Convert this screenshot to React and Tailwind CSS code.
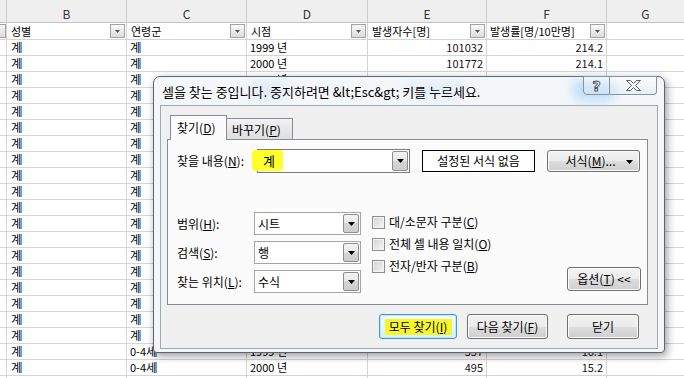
import React from "react";

const years = [];
for (let y = 1999; y <= 2017; y++) years.push(y);
const eVals = ["101032","101772","102914","103350","104127","105018","105402","106711","107298","108003","108420","109152","110037","110618","111294","112005","112743","113380","114026"];
const fVals = ["214.2","214.1","215.8","216.0","216.9","217.4","217.7","219.3","219.9","220.6","220.8","221.5","222.7","223.1","223.9","224.6","225.4","226.0","226.8"];

const rows = years.map((y, i) => ({ b: "계", c: "계", d: `${y} 년`, e: eVals[i], f: fVals[i] }));
rows.push({ b: "계", c: "0-4세", d: "1999 년", e: "557", f: "16.1" });
rows.push({ b: "계", c: "0-4세", d: "2000 년", e: "495", f: "15.2" });
rows.push({ b: "", c: "", d: "", e: "", f: "" });

function KText({ children }) {
  if (!children) return null;
  return (
    <span className="inline-flex items-center">
      <span>{children}</span>
      <span className="inline-block w-[2px] h-[11px] bg-[#5aa5e6] ml-[-1px]" />
    </span>
  );
}

function FilterBtn() {
  return (
    <div className="w-[15px] h-[14px] mr-[1px] shrink-0 border border-[#a3a3a3] bg-[linear-gradient(#f8f8f8,#dcdcdc)] flex items-center justify-center">
      <svg width="5" height="3" viewBox="0 0 5 3"><path d="M0 0h5L2.5 3z" fill="#555" /></svg>
    </div>
  );
}

function Arrow() {
  return (
    <svg width="7" height="4" viewBox="0 0 7 4"><path d="M0 0h7L3.5 4z" fill="#000" /></svg>
  );
}

function ComboBtn() {
  return (
    <div className="w-[16px] self-stretch m-[1px] border border-[#8d8d8d] rounded-[2px] bg-[linear-gradient(#f3f3f3_0%,#e8e8e8_50%,#d6d6d6_50%,#cdcdcd_100%)] flex items-center justify-center shrink-0">
      <Arrow />
    </div>
  );
}

function Combo({ text }) {
  return (
    <div className="w-[107px] h-[23px] border border-[#a5a5a5] bg-white flex items-stretch">
      <div className="flex-1 flex items-center pl-[3px] text-[12px]">{text}</div>
      <ComboBtn />
    </div>
  );
}

function Check({ children }) {
  return (
    <div className="h-[22px] flex items-center">
      <div className="w-[13px] h-[13px] border border-[#8e8f8f] bg-[linear-gradient(135deg,#d2d2d2,#f7f7f7)] shadow-[inset_0_0_0_1px_#f2f2f2]" />
      <span className="ml-[4px] text-[12px] leading-[16px]">{children}</span>
    </div>
  );
}

const btnCls =
  "h-[25px] flex items-center justify-center rounded-[3px] border border-[#707070] bg-[linear-gradient(#f2f2f2_0%,#ebebeb_50%,#dddddd_50%,#cfcfcf_100%)] shadow-[inset_0_0_0_1px_#fbfbfb] text-[12px] leading-[16px]";

export default function App() {
  return (
    <div className="relative w-[684px] h-[378px] overflow-hidden bg-white text-black font-['Noto_Sans_CJK_KR','Noto_Sans',sans-serif]">
      {/* spreadsheet */}
      <div className="flex flex-col">
        <div className="flex h-[23px] bg-[#efefef] border-b border-[#c3c3c3] text-[12px] text-[#333] shrink-0">
          <div className="w-[7px] border-r border-[#cdcdcd]" />
          <div className="w-[120px] border-r border-[#cdcdcd] text-center pt-[6px] leading-[16px]">B</div>
          <div className="w-[120px] border-r border-[#cdcdcd] text-center pt-[6px] leading-[16px]">C</div>
          <div className="w-[121px] border-r border-[#cdcdcd] text-center pt-[6px] leading-[16px]">D</div>
          <div className="w-[119px] border-r border-[#cdcdcd] text-center pt-[6px] leading-[16px]">E</div>
          <div className="w-[120px] border-r border-[#cdcdcd] text-center pt-[6px] leading-[16px]">F</div>
          <div className="flex-1 text-center pt-[6px] leading-[16px]">G</div>
        </div>
        <div className="flex h-[17px] text-[11px] shrink-0">
          <div className="w-[7px] border-r border-b border-[#d4d4d4] flex items-center justify-end">
            <div className="w-[6px] h-[14px] border border-l-0 border-[#a3a3a3] bg-[linear-gradient(#f8f8f8,#dcdcdc)]" />
          </div>
          <div className="w-[120px] border-r border-b border-[#d4d4d4] flex items-center pl-[4px]">
            <span className="flex-1">성별</span><FilterBtn />
          </div>
          <div className="w-[120px] border-r border-b border-[#d4d4d4] flex items-center pl-[4px]">
            <span className="flex-1">연령군</span><FilterBtn />
          </div>
          <div className="w-[121px] border-r border-b border-[#d4d4d4] flex items-center pl-[4px]">
            <span className="flex-1">시점</span><FilterBtn />
          </div>
          <div className="w-[119px] border-r border-b border-[#d4d4d4] flex items-center pl-[4px]">
            <span className="flex-1">발생자수[명]</span><FilterBtn />
          </div>
          <div className="w-[120px] border-r border-b border-[#d4d4d4] flex items-center pl-[3px]">
            <span className="flex-1 whitespace-nowrap">발생률[명/10만명]</span><FilterBtn />
          </div>
          <div className="flex-1 border-b border-[#d4d4d4]" />
        </div>
        {rows.map((r, i) => (
          <div key={i} className="flex h-[16px] text-[11px] leading-[15px] shrink-0">
            <div className="w-[7px] border-r border-b border-[#d4d4d4]" />
            <div className="w-[120px] border-r border-b border-[#d4d4d4] flex items-center pl-[4px]"><KText>{r.b}</KText></div>
            <div className="w-[120px] border-r border-b border-[#d4d4d4] flex items-center pl-[3px]"><KText>{r.c}</KText></div>
            <div className="w-[121px] border-r border-b border-[#d4d4d4] flex items-center pl-[3px]">{r.d}</div>
            <div className="w-[119px] border-r border-b border-[#d4d4d4] flex items-center justify-end pr-[3px] text-[#1d1020]">{r.e}</div>
            <div className="w-[120px] border-r border-b border-[#d4d4d4] flex items-center justify-end pr-[3px] text-[#1d1020]">{r.f}</div>
            <div className="flex-1 border-b border-[#d4d4d4]" />
          </div>
        ))}
      </div>

      {/* dialog window */}
      <div className="absolute left-[153px] top-[76px] w-[512px] h-[277px] rounded-t-[7px] rounded-b-[4px] border border-[#5b6670] bg-[#f4f7fa] shadow-[2px_3px_8px_rgba(0,0,0,0.4)] flex flex-col">
        <div className="relative h-[28px] flex items-start pl-[8px] pr-[7px] shrink-0">
          <div className="absolute left-[418px] top-[2px] w-[44px] h-[22px] rounded-full bg-[#a9d2f5] blur-[6px] opacity-70" />
          <div className="absolute left-[95px] top-[6px] w-[40px] h-[16px] rounded-full bg-[#c8e0f6] blur-[6px] opacity-60" />
          <div className="absolute left-[250px] top-[6px] w-[60px] h-[16px] rounded-full bg-[#c8e0f6] blur-[6px] opacity-50" />
          <span className="relative mt-[7px] text-[13px] leading-[16px] whitespace-nowrap [text-shadow:0_0_6px_#fff]">
            셀을 찾는 중입니다. 중지하려면 &amp;lt;Esc&amp;gt; 키를 누르세요.
          </span>
          <div className="relative ml-auto mt-[-1px] flex">
            <div className="w-[27px] h-[19px] border border-[#8893a0] rounded-bl-[4px] bg-[linear-gradient(rgba(255,255,255,0.5),rgba(220,230,240,0.4))] flex items-center justify-center">
              <span className="text-[14px] leading-[14px] font-bold text-white [-webkit-text-stroke:1px_#4e5660] font-['DejaVu_Sans',sans-serif]">?</span>
            </div>
            <div className="w-[47px] h-[19px] border border-l-0 border-[#8893a0] rounded-br-[4px] bg-[linear-gradient(rgba(255,255,255,0.5),rgba(220,230,240,0.4))] flex items-center justify-center">
              <svg width="15" height="11" viewBox="0 0 15 11">
                <path d="M0.5 0.5H4.5L7.5 3.5L10.5 0.5H14.5L9.5 5.5L14.5 10.5H10.5L7.5 7.5L4.5 10.5H0.5L5.5 5.5Z" fill="#fff" stroke="#555d66" strokeWidth="1" />
              </svg>
            </div>
          </div>
        </div>

        <div className="flex-1 mx-[6px] mb-[3px] border border-[#a0a8b0] bg-[#f0f0f0] flex flex-col">
          {/* tabs */}
          <div className="flex items-end h-[25px] mt-[8px] ml-[9px] text-[12px] leading-[16px]">
            <div className="relative z-10 w-[57px] h-[25px] mb-[-1px] border border-b-0 border-[#898c95] bg-[#fbfbfb] flex items-start pl-[6px] pt-[4px]">
              찾기(<u>D</u>)
            </div>
            <div className="w-[66px] h-[21px] border border-l-0 border-b-0 border-[#898c95] bg-[linear-gradient(#f2f2f2,#dedede)] flex items-start pl-[5px] pt-[3px]">
              바꾸기(<u>P</u>)
            </div>
          </div>
          {/* panel */}
          <div className="ml-[6px] mr-[9px] h-[166px] border border-[#898c95] bg-[#fbfbfb] flex flex-col text-[12px] leading-[16px]">
            <div className="flex items-center mt-[9px] pl-[9px]">
              <div className="w-[80px]">찾을 내용(<u>N</u>):</div>
              <div className="relative w-[153px] h-[24px] border border-[#7a7a7a] bg-white flex items-stretch">
                <div className="absolute left-[-6px] top-[0px] w-[31px] h-[21px] rounded-[3px] bg-[#ffff2a] blur-[0.6px]" />
                <div className="relative flex-1 flex items-center pl-[5px] text-[13px]">계</div>
                <ComboBtn />
              </div>
              <div className="ml-[12px] w-[113px] h-[22px] border border-black bg-white flex items-center justify-center">설정된 서식 없음</div>
              <div className={`ml-[12px] w-[93px] !h-[22px] ${btnCls} relative`}>
                <span className="mr-[6px]">서식(<u>M</u>)...</span>
                <div className="absolute right-[6px] top-[9px]"><Arrow /></div>
              </div>
            </div>

            <div className="flex items-start mt-[38px] pl-[9px]">
              <div className="flex flex-col gap-[6px] mt-[1px]">
                <div className="flex items-center">
                  <div className="w-[77px]">범위(<u>H</u>):</div>
                  <Combo text="시트" />
                </div>
                <div className="flex items-center">
                  <div className="w-[77px]">검색(<u>S</u>):</div>
                  <Combo text="행" />
                </div>
                <div className="flex items-center">
                  <div className="w-[77px] whitespace-nowrap">찾는 위치(<u>L</u>):</div>
                  <Combo text="수식" />
                </div>
              </div>
              <div className="ml-[11px] flex flex-col">
                <Check>대/소문자 구분(<u>C</u>)</Check>
                <Check>전체 셀 내용 일치(<u>O</u>)</Check>
                <Check>전자/반자 구분(<u>B</u>)</Check>
              </div>
              <div className={`ml-auto mr-[6px] mt-[56px] w-[74px] !h-[24px] ${btnCls}`}>
                옵션(<u>T</u>) &lt;&lt;
              </div>
            </div>
          </div>

          {/* bottom buttons */}
          <div className="flex justify-end mt-[9px] mr-[18px]">
            <div className="w-[78px] h-[25px] flex items-center justify-center rounded-[3px] border border-[#3c9ad8] bg-[linear-gradient(#f4fbff,#d8effc)] shadow-[inset_0_0_0_1px_#bfe6fb] text-[12px] leading-[16px]">
              <div className="w-[67px] h-[16px] bg-[#f6f62a] flex items-center justify-center">모두 찾기(<u>I</u>)</div>
            </div>
            <div className={`ml-[10px] w-[81px] ${btnCls}`}>다음 찾기(<u>F</u>)</div>
            <div className={`ml-[19px] w-[72px] ${btnCls}`}>닫기</div>
          </div>
        </div>
      </div>
    </div>
  );
}
